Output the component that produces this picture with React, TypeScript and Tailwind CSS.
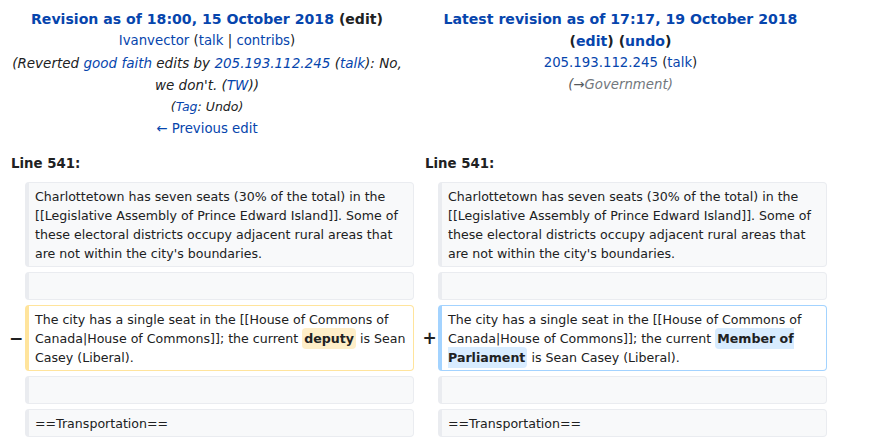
import React from "react";

const link = "text-[#0645ad]";

const Context: React.FC<{ children?: React.ReactNode }> = ({ children }) => (
  <div className="min-h-[28px] rounded-[4px] border border-l-4 border-[#eaecf0] bg-[#f8f9fa] pl-[6px] pr-[6px] pt-[4px] pb-[3px]">
    {children}
  </div>
);

const Marker: React.FC<{ sign?: string }> = ({ sign }) => (
  <div className="flex items-center justify-center pl-[7px] text-[17px] font-bold text-[#202122]">
    {sign}
  </div>
);

const App: React.FC = () => {
  return (
    <div className="w-[874px] h-[442px] overflow-hidden bg-white font-['DejaVu_Sans',sans-serif] text-[#202122]">
      <div className="grid grid-cols-[414px_413px] pt-[8px] text-center text-[13.3px] leading-[22px]">
        <div className="px-[4px]">
          <div className="text-[14.1px] font-bold">
            <span className={link}>Revision as of 18:00, 15 October 2018</span>{" "}
            <span>(edit)</span>
          </div>
          <div>
            <span className={link}>Ivanvector</span> (<span className={link}>talk</span> |{" "}
            <span className={link}>contribs</span>)
          </div>
          <div className="text-[13.5px] italic">
            (Reverted <span className={link}>good faith</span> edits by{" "}
            <span className={link}>205.193.112.245</span> (<span className={link}>talk</span>): No,
            we don't. (<span className={link}>TW</span>))
          </div>
          <div className="text-[12.5px] italic">
            (<span className={link}>Tag</span>: Undo)
          </div>
          <div className={link}>← Previous edit</div>
        </div>
        <div className="px-[4px]">
          <div className="text-[14.1px] font-bold">
            <span className={link}>Latest revision as of 17:17, 19 October 2018</span>
            <br />
            (<span className={link}>edit</span>) (<span className={link}>undo</span>)
          </div>
          <div>
            <span className={link}>205.193.112.245</span> (<span className={link}>talk</span>)
          </div>
          <div className="italic">
            <span className="text-[#54595d]">(→</span>
            <span className="text-[#72777d]">Government)</span>
          </div>
        </div>
      </div>

      <div className="mt-[13px] grid grid-cols-[414px_413px] text-[13.3px] font-bold leading-[22px]">
        <div className="pl-[11px]">Line 541:</div>
        <div className="pl-[11px]">Line 541:</div>
      </div>

      <div className="mt-[7px] grid grid-cols-[25px_389px_24px_389px] gap-y-[5px] text-[12.6px] leading-[19px]">
        <Marker />
        <Context>
          Charlottetown has seven seats (30% of the total) in the [[Legislative Assembly of Prince
          Edward Island]]. Some of these electoral districts occupy adjacent rural areas that are not
          within the city's boundaries.
        </Context>
        <Marker />
        <Context>
          Charlottetown has seven seats (30% of the total) in the [[Legislative Assembly of Prince
          Edward Island]]. Some of these electoral districts occupy adjacent rural areas that are not
          within the city's boundaries.
        </Context>

        <Marker />
        <Context />
        <Marker />
        <Context />

        <Marker sign="−" />
        <div className="rounded-[4px] border border-l-4 border-[#ffe49c] bg-white pl-[6px] pr-[6px] pt-[4px] pb-[3px]">
          The city has a single seat in the [[House of Commons of Canada|House of Commons]]; the
          current{" "}
          <span className="rounded-[4px] bg-[#feeec8] px-[2px] py-[3px] font-bold">deputy</span> is
          Sean Casey (Liberal).
        </div>
        <Marker sign="+" />
        <div className="rounded-[4px] border border-l-4 border-[#a3d3ff] bg-white pl-[6px] pr-[6px] pt-[4px] pb-[3px]">
          The city has a single seat in the [[House of Commons of Canada|House of Commons]]; the
          current{" "}
          <span className="rounded-[4px] bg-[#d8ecff] px-[2px] py-[3px] font-bold">
            Member of Parliament
          </span>{" "}
          is Sean Casey (Liberal).
        </div>

        <Marker />
        <Context />
        <Marker />
        <Context />

        <Marker />
        <Context>==Transportation==</Context>
        <Marker />
        <Context>==Transportation==</Context>
      </div>
    </div>
  );
};

export default App;
